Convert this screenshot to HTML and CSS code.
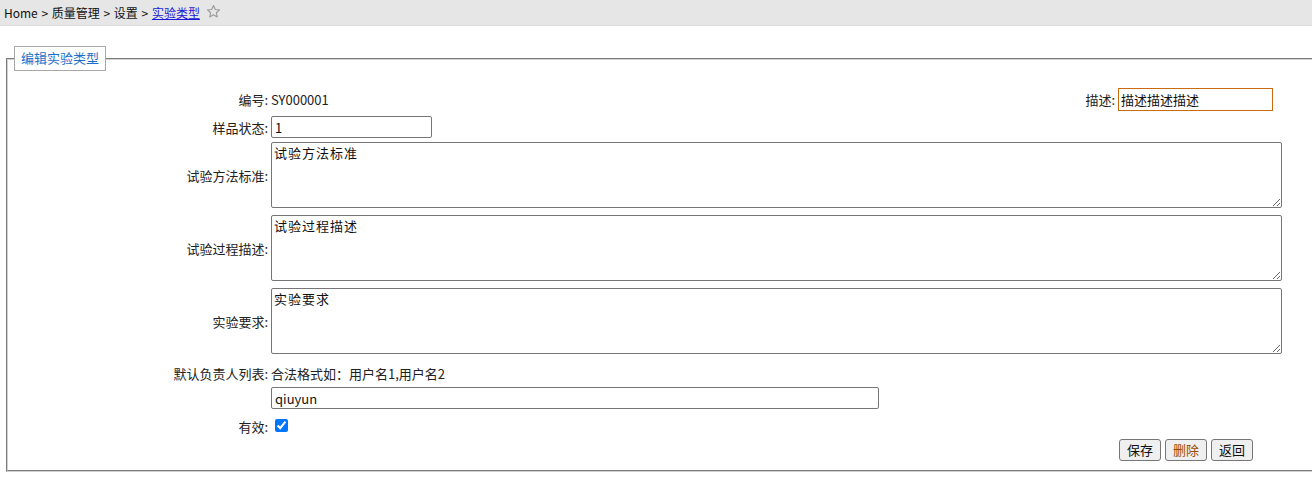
FILE: index.html
```html
<!DOCTYPE html>
<html lang="zh-CN">
<head>
<meta charset="utf-8">
<title>编辑实验类型</title>
<link rel="stylesheet" href="styles.css">
</head>
<body>
<div class="crumbs">
  <span>Home &gt; 质量管理 &gt; 设置 &gt; </span><a class="current" href="#">实验类型</a>
  <svg class="star" width="15" height="15" viewBox="0 0 24 24"><path d="M12 2.5l2.9 6.2 6.7.7-5 4.6 1.4 6.7L12 17.3l-6 3.4 1.4-6.7-5-4.6 6.7-.7z" fill="none" stroke="#9a9a9a" stroke-width="1.8" stroke-linejoin="round"/></svg>
</div>
<fieldset class="box">
  <legend class="box-title">编辑实验类型</legend>
  <div class="form">
    <div class="row row-first">
      <label class="lbl">编号:</label>
      <div class="val split">
        <span>SY000001</span>
        <span class="desc"><label class="desc-lbl">描述:</label><input class="desc-input" type="text" value="描述描述描述"></span>
      </div>
    </div>
    <div class="row row-state">
      <label class="lbl">样品状态:</label>
      <div class="val"><input class="short" type="text" value="1"></div>
    </div>
    <div class="row row-ta1">
      <label class="lbl">试验方法标准:</label>
      <div class="val"><textarea class="ta">试验方法标准</textarea></div>
    </div>
    <div class="row row-ta">
      <label class="lbl">试验过程描述:</label>
      <div class="val"><textarea class="ta">试验过程描述</textarea></div>
    </div>
    <div class="row row-ta">
      <label class="lbl">实验要求:</label>
      <div class="val"><textarea class="ta">实验要求</textarea></div>
    </div>
    <div class="row row-hint">
      <label class="lbl">默认负责人列表:</label>
      <div class="val">合法格式如：用户名1,用户名2</div>
    </div>
    <div class="row row-users">
      <span class="lbl"></span>
      <div class="val"><input class="users" type="text" value="qiuyun"></div>
    </div>
    <div class="row row-check">
      <label class="lbl">有效:</label>
      <div class="val"><input class="chk" type="checkbox" checked></div>
    </div>
    <div class="row row-btns">
      <span class="lbl"></span>
      <div class="val btns">
        <button class="btn" type="button">保存</button>
        <button class="btn btn-del" type="button">删除</button>
        <button class="btn" type="button">返回</button>
      </div>
    </div>
  </div>
</fieldset>
</body>
</html>
```
FILE: styles.css
```css
html, body {
  margin: 0;
  padding: 0;
  overflow: hidden;
  background: #fff;
}
body {
  font-family: "Microsoft YaHei", "Noto Sans CJK SC", "Noto Sans", sans-serif;
  font-size: 13px;
  color: #222;
}
.crumbs {
  height: 26px;
  background: #e6e6e6;
  border-bottom: 1px solid #dcdcdc;
  box-sizing: border-box;
  padding-left: 4px;
  font-size: 12px;
  line-height: 24px;
  word-spacing: 1px;
  display: flex;
  align-items: center;
  white-space: pre;
  color: #111;
}
.current {
  color: #1a1ad6;
  text-decoration: underline;
}
.star {
  margin-left: 6px;
  margin-top: -3px;
}
.box {
  margin: 20px -40px 0 6px;
  padding: 0 0 9px 0;
  border: 2px groove #d0d0d0;
  min-width: 0;
}
.box-title {
  margin-left: 6px;
  padding: 2px 6px 3px 6px;
  border: 1px solid #a8a8a8;
  color: #1a6fc9;
  font-size: 13px;
  line-height: 18px;
}
.form {
  padding-top: 17px;
  display: flex;
  flex-direction: column;
}
.row {
  display: flex;
  align-items: center;
}
.lbl {
  width: 260px;
  flex: none;
  text-align: right;
  margin-right: 3px;
  color: #222;
}
.val {
  width: 1011px;
  flex: none;
  color: #222;
}
.split {
  display: flex;
  align-items: center;
  justify-content: space-between;
}
.row-first { height: 23px; }
.desc {
  display: flex;
  align-items: center;
  margin-right: 9px;
}
.desc-lbl { margin-right: 3px; }
input[type="text"], textarea, button {
  font-family: "Microsoft YaHei", "Noto Sans CJK SC", "Noto Sans", sans-serif;
  font-size: 13px;
  color: #111;
  box-sizing: border-box;
  margin: 0;
}
.desc-input {
  width: 155px;
  height: 23px;
  border: 1px solid #c86b12;
  border-radius: 0;
  padding: 0 2px;
  outline: none;
}
.row-state { margin-top: 5px; height: 22px; }
.short {
  width: 161px;
  height: 22px;
  border: 1px solid #767676;
  border-radius: 2px;
  padding: 0 3px;
}
.row-ta1 { margin-top: 4px; }
.row-ta { margin-top: 7px; }
.ta {
  display: block;
  width: 1011px;
  height: 66px;
  border: 1px solid #767676;
  border-radius: 2px;
  padding: 1px 2px;
  letter-spacing: 1px;
  line-height: 18px;
  resize: vertical;
}
.row-hint { margin-top: 9px; height: 20px; }
.row-users { margin-top: 4px; height: 22px; }
.users {
  width: 608px;
  height: 22px;
  border: 1px solid #767676;
  border-radius: 2px;
  padding: 0 3px;
}
.row-check { margin-top: 9px; height: 16px; }
.chk {
  margin: 0 0 0 4px;
  width: 13px;
  height: 13px;
}
.row-btns { margin-top: 5px; height: 22px; }
.btns {
  display: flex;
  justify-content: flex-end;
  gap: 4px;
  padding-right: 29px;
  box-sizing: border-box;
}
.btn {
  height: 22px;
  padding: 0 7px;
  border: 1px solid #767676;
  border-radius: 3px;
  background: #efefef;
  line-height: 18px;
}
.btn-del {
  color: #9a4a00;
}
```
